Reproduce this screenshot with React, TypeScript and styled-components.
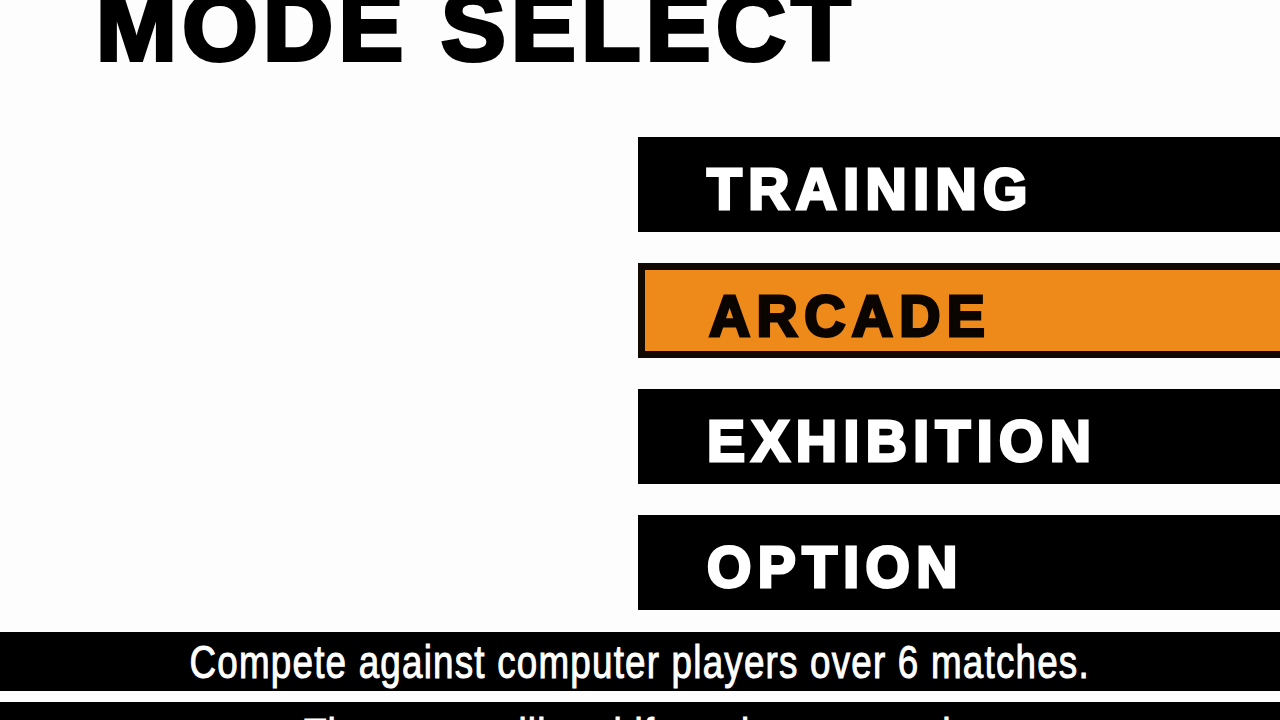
import React from "react";
import styled, { createGlobalStyle } from "styled-components";

const Global = createGlobalStyle`
  html, body { margin: 0; padding: 0; background: #fdfdfd; }
  body { font-family: "Liberation Sans", Arial, sans-serif; }
`;

const Screen = styled.div`
  width: 1280px;
  height: 720px;
  overflow: hidden;
  background: #fdfdfd;
  display: flex;
  flex-direction: column;
`;

const Title = styled.h1`
  margin: -22px 0 0 0;
  padding-left: 96px;
  height: 96px;
  font-family: "Liberation Sans", Arial, sans-serif;
  font-weight: 700;
  font-size: 97px;
  line-height: 1;
  letter-spacing: 5.4px;
  color: #000;
  -webkit-text-stroke: 4px #000;
  white-space: nowrap;
`;

const Menu = styled.div`
  display: flex;
  flex-direction: column;
  gap: 31px;
  margin-top: 63px;
  padding-left: 638px;
  margin-right: -30px;
`;

const Item = styled.div<{ $active?: boolean }>`
  box-sizing: border-box;
  height: 95px;
  background: ${(p) => (p.$active ? "#ee8a1a" : "#000")};
  border: ${(p) => (p.$active ? "7px solid #120a02" : "none")};
  padding: ${(p) => (p.$active ? "3px 0 0 64px" : "9px 0 0 69px")};
  font-family: "Liberation Sans", Arial, sans-serif;
  font-weight: 700;
  font-size: 57px;
  line-height: 86px;
  letter-spacing: 6.4px;
  color: ${(p) => (p.$active ? "#0a0500" : "#fff")};
  -webkit-text-stroke: 3px ${(p) => (p.$active ? "#0a0500" : "#fff")};
  white-space: nowrap;
`;

const InfoBar = styled.div<{ $top: number; $pad: number }>`
  margin-top: ${(p) => p.$top}px;
  height: 59px;
  flex-shrink: 0;
  background: #000;
  box-sizing: border-box;
  padding-top: ${(p) => p.$pad}px;
  text-align: center;
  white-space: nowrap;
`;

const InfoText = styled.span`
  display: inline-block;
  color: #fff;
  font-family: "Liberation Sans", Arial, sans-serif;
  font-size: 46px;
  line-height: 46px;
  letter-spacing: 1.5px;
  -webkit-text-stroke: 1px #fff;
  transform: scaleX(0.8);
  transform-origin: center;
`;

const items = ["TRAINING", "ARCADE", "EXHIBITION", "OPTION"];

export default function App() {
  return (
    <>
      <Global />
      <Screen>
        <Title>MODE SELECT</Title>
        <Menu>
          {items.map((t) => (
            <Item key={t} $active={t === "ARCADE"}>
              {t}
            </Item>
          ))}
        </Menu>
        <InfoBar $top={22} $pad={7}>
          <InfoText>Compete against computer players over 6 matches.</InfoText>
        </InfoBar>
        <InfoBar $top={11} $pad={10}>
          <InfoText>The game will end if you lose a match.</InfoText>
        </InfoBar>
      </Screen>
    </>
  );
}
